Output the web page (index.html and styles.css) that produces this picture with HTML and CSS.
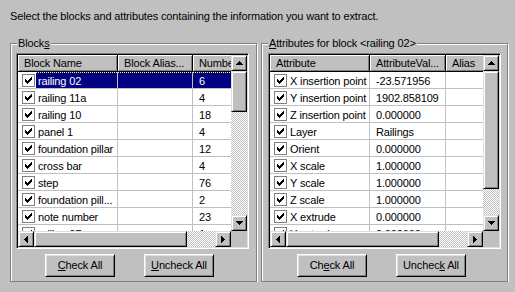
FILE: index.html
```html
<!DOCTYPE html>
<html lang="en">
<head>
    <meta charset="UTF-8">
    <meta name="viewport" content="width=device-width, initial-scale=1.0">
    <title>Extract Attributes</title>
    <link rel="stylesheet" href="styles.css">
</head>
<body>
    <svg class="defs" width="0" height="0">
        <symbol id="chk" viewBox="0 0 7 7"><path d="M0 2H1V3H2V4H3V3H4V2H5V1H6V0H7V3H6V4H5V5H4V6H3V7H2V6H1V5H0Z"/></symbol>
        <symbol id="up" viewBox="0 0 7 4"><path d="M3 0H4V1H5V2H6V3H7V4H0V3H1V2H2V1H3Z"/></symbol>
        <symbol id="down" viewBox="0 0 7 4"><path d="M0 0H7V1H6V2H5V3H4V4H3V3H2V2H1V1H0Z"/></symbol>
        <symbol id="left" viewBox="0 0 4 7"><path d="M3 0H4V7H3V6H2V5H1V4H0V3H1V2H2V1H3Z"/></symbol>
        <symbol id="right" viewBox="0 0 4 7"><path d="M0 0H1V1H2V2H3V3H4V4H3V5H2V6H1V7H0Z"/></symbol>
    </svg>

    <p class="prompt">Select the blocks and attributes containing the information you want to extract.</p>

    <div class="groups">
        <div class="group">
            <span class="group-title">Block<u>s</u></span>
            <div class="listview">
                <div class="lv-body">
                    <div class="lv-header">
                        <div class="hd c1">Block Name</div>
                        <div class="hd c2">Block Alias...</div>
                        <div class="hd c3">Number</div>
                    </div>
                    <div class="row selected">
                        <div class="cell c1"><span class="check"><svg><use href="#chk"/></svg></span><span class="label">railing 02</span></div>
                        <div class="cell c2"></div><div class="cell c3">6</div>
                    </div>
                    <div class="row">
                        <div class="cell c1"><span class="check"><svg><use href="#chk"/></svg></span><span class="label">railing 11a</span></div>
                        <div class="cell c2"></div><div class="cell c3">4</div>
                    </div>
                    <div class="row">
                        <div class="cell c1"><span class="check"><svg><use href="#chk"/></svg></span><span class="label">railing 10</span></div>
                        <div class="cell c2"></div><div class="cell c3">18</div>
                    </div>
                    <div class="row">
                        <div class="cell c1"><span class="check"><svg><use href="#chk"/></svg></span><span class="label">panel 1</span></div>
                        <div class="cell c2"></div><div class="cell c3">4</div>
                    </div>
                    <div class="row">
                        <div class="cell c1"><span class="check"><svg><use href="#chk"/></svg></span><span class="label">foundation pillar</span></div>
                        <div class="cell c2"></div><div class="cell c3">12</div>
                    </div>
                    <div class="row">
                        <div class="cell c1"><span class="check"><svg><use href="#chk"/></svg></span><span class="label">cross bar</span></div>
                        <div class="cell c2"></div><div class="cell c3">4</div>
                    </div>
                    <div class="row">
                        <div class="cell c1"><span class="check"><svg><use href="#chk"/></svg></span><span class="label">step</span></div>
                        <div class="cell c2"></div><div class="cell c3">76</div>
                    </div>
                    <div class="row">
                        <div class="cell c1"><span class="check"><svg><use href="#chk"/></svg></span><span class="label">foundation pill...</span></div>
                        <div class="cell c2"></div><div class="cell c3">2</div>
                    </div>
                    <div class="row">
                        <div class="cell c1"><span class="check"><svg><use href="#chk"/></svg></span><span class="label">note number</span></div>
                        <div class="cell c2"></div><div class="cell c3">23</div>
                    </div>
                    <div class="row">
                        <div class="cell c1"><span class="check"><svg><use href="#chk"/></svg></span><span class="label">railing 07</span></div>
                        <div class="cell c2"></div><div class="cell c3">1</div>
                    </div>
                </div>
                <div class="vscroll">
                    <div class="raised sb-btn"><svg class="arr-v"><use href="#up"/></svg></div>
                    <div class="raised thumb" style="height: 41px"></div>
                    <div class="track"></div>
                    <div class="raised sb-btn"><svg class="arr-v"><use href="#down"/></svg></div>
                </div>
                <div class="hscroll">
                    <div class="raised sb-btn"><svg class="arr-h"><use href="#left"/></svg></div>
                    <div class="raised thumb" style="width: 153px"></div>
                    <div class="track"></div>
                    <div class="raised sb-btn"><svg class="arr-h"><use href="#right"/></svg></div>
                </div>
                <div class="corner"></div>
            </div>
            <div class="buttons">
                <button class="btn"><u>C</u>heck All</button>
                <button class="btn"><u>U</u>ncheck All</button>
            </div>
        </div>

        <div class="group attrs">
            <span class="group-title"><u>A</u>ttributes for block &lt;railing 02&gt;</span>
            <div class="listview">
                <div class="lv-body">
                    <div class="lv-header">
                        <div class="hd c1">Attribute</div>
                        <div class="hd c2">AttributeVal...</div>
                        <div class="hd c3">Alias</div>
                    </div>
                    <div class="row">
                        <div class="cell c1"><span class="check"><svg><use href="#chk"/></svg></span><span class="label">X insertion point</span></div>
                        <div class="cell c2">-23.571956</div><div class="cell c3"></div>
                    </div>
                    <div class="row">
                        <div class="cell c1"><span class="check"><svg><use href="#chk"/></svg></span><span class="label">Y insertion point</span></div>
                        <div class="cell c2">1902.858109</div><div class="cell c3"></div>
                    </div>
                    <div class="row">
                        <div class="cell c1"><span class="check"><svg><use href="#chk"/></svg></span><span class="label">Z insertion point</span></div>
                        <div class="cell c2">0.000000</div><div class="cell c3"></div>
                    </div>
                    <div class="row">
                        <div class="cell c1"><span class="check"><svg><use href="#chk"/></svg></span><span class="label">Layer</span></div>
                        <div class="cell c2">Railings</div><div class="cell c3"></div>
                    </div>
                    <div class="row">
                        <div class="cell c1"><span class="check"><svg><use href="#chk"/></svg></span><span class="label">Orient</span></div>
                        <div class="cell c2">0.000000</div><div class="cell c3"></div>
                    </div>
                    <div class="row">
                        <div class="cell c1"><span class="check"><svg><use href="#chk"/></svg></span><span class="label">X scale</span></div>
                        <div class="cell c2">1.000000</div><div class="cell c3"></div>
                    </div>
                    <div class="row">
                        <div class="cell c1"><span class="check"><svg><use href="#chk"/></svg></span><span class="label">Y scale</span></div>
                        <div class="cell c2">1.000000</div><div class="cell c3"></div>
                    </div>
                    <div class="row">
                        <div class="cell c1"><span class="check"><svg><use href="#chk"/></svg></span><span class="label">Z scale</span></div>
                        <div class="cell c2">1.000000</div><div class="cell c3"></div>
                    </div>
                    <div class="row">
                        <div class="cell c1"><span class="check"><svg><use href="#chk"/></svg></span><span class="label">X extrude</span></div>
                        <div class="cell c2">0.000000</div><div class="cell c3"></div>
                    </div>
                    <div class="row">
                        <div class="cell c1"><span class="check"><svg><use href="#chk"/></svg></span><span class="label">Y extrude</span></div>
                        <div class="cell c2">0.000000</div><div class="cell c3"></div>
                    </div>
                </div>
                <div class="vscroll">
                    <div class="raised sb-btn"><svg class="arr-v"><use href="#up"/></svg></div>
                    <div class="raised thumb" style="height: 118px"></div>
                    <div class="track"></div>
                    <div class="raised sb-btn"><svg class="arr-v"><use href="#down"/></svg></div>
                </div>
                <div class="hscroll">
                    <div class="raised sb-btn"><svg class="arr-h"><use href="#left"/></svg></div>
                    <div class="raised thumb" style="width: 153px"></div>
                    <div class="track"></div>
                    <div class="raised sb-btn"><svg class="arr-h"><use href="#right"/></svg></div>
                </div>
                <div class="corner"></div>
            </div>
            <div class="buttons">
                <button class="btn">Ch<u>e</u>ck All</button>
                <button class="btn">Unchec<u>k</u> All</button>
            </div>
        </div>
    </div>
</body>
</html>
```

FILE: styles.css
```css
body {
    margin: 0;
    background: #c0c0c0;
    font: 11px/13px "Liberation Sans", Arial, sans-serif;
    letter-spacing: -0.15px;
    color: #000;
}
.defs { position: absolute; }
svg { shape-rendering: crispEdges; fill: #000; display: block; }
u { text-underline-offset: 1px; }

.prompt {
    margin: 0;
    padding: 10px 10px 0;
}

.groups {
    display: flex;
    gap: 4px;
    margin: 20px 0 0 10px;
}
.group {
    position: relative;
    width: 247px;
    height: 239px;
    box-sizing: border-box;
    border: 1px solid #808080;
    box-shadow: 1px 1px 0 #fff, inset 1px 1px 0 #fff;
    padding: 9px 0 0 5px;
}
.group.attrs { padding-left: 6px; }
.group-title {
    position: absolute;
    top: -7px;
    left: 6px;
    padding: 0 1px;
    background: #c0c0c0;
    white-space: nowrap;
}

/* list view */
.listview {
    display: grid;
    grid-template-columns: 213px 16px;
    grid-template-rows: 176px 16px;
    width: 233px;
    height: 196px;
    box-sizing: border-box;
    border: 1px solid;
    border-color: #808080 #fff #fff #808080;
    box-shadow: inset 1px 1px 0 #000, inset -1px -1px 0 #dfdfdf;
    padding: 1px;
    background: #fff;
}
.lv-body { overflow: hidden; }
.lv-header, .row { display: flex; }

.hd {
    flex: none;
    height: 17px;
    box-sizing: border-box;
    background: #c0c0c0;
    border-right: 1px solid #000;
    border-bottom: 1px solid #000;
    box-shadow: inset 1px 1px 0 #fff, inset -1px -1px 0 #808080;
    padding: 1px 0 0 6px;
    line-height: 15px;
    white-space: nowrap;
    overflow: hidden;
}
.c1 { width: 100px; }
.c2 { width: 75px; }
.c3 { width: 60px; }
.attrs .c2 { width: 76px; }

.cell {
    flex: none;
    height: 17px;
    box-sizing: border-box;
    border-right: 1px solid #c0c0c0;
    border-bottom: 1px solid #c0c0c0;
    padding: 3px 0 0 6px;
    white-space: nowrap;
    overflow: hidden;
}
.cell.c1 {
    display: flex;
    padding: 0 0 0 4px;
}
.check {
    flex: none;
    width: 13px;
    height: 13px;
    box-sizing: border-box;
    margin-top: 2px;
    border: 1px solid #808080;
    background: #fff;
    display: flex;
    align-items: center;
    justify-content: center;
}
.check svg { width: 7px; height: 7px; }
.label {
    flex: 1;
    min-width: 0;
    margin-left: 1px;
    padding: 3px 2px 0;
    overflow: hidden;
}
.selected .label, .selected .c2, .selected .c3 {
    background: #000080 repeating-linear-gradient(90deg, #ffff80 0 1px, transparent 1px 2px) top / 100% 1px no-repeat;
    color: #fff;
}

/* scroll bars */
.raised {
    box-sizing: border-box;
    background: #c0c0c0;
    border: 1px solid;
    border-color: #dfdfdf #000 #000 #dfdfdf;
    box-shadow: inset 1px 1px 0 #fff, inset -1px -1px 0 #808080;
}
.vscroll, .hscroll {
    display: flex;
    background: repeating-conic-gradient(#fff 0 25%, #c0c0c0 0 50%) 0 0 / 2px 2px;
}
.vscroll { flex-direction: column; }
.sb-btn {
    flex: none;
    width: 16px;
    height: 16px;
    display: flex;
    align-items: center;
    justify-content: center;
}
.thumb { flex: none; }
.vscroll .thumb { width: 16px; }
.hscroll .thumb { height: 16px; }
.track { flex: 1; }
.arr-v { width: 7px; height: 4px; }
.arr-h { width: 4px; height: 7px; }
.corner { background: #c0c0c0; }

/* buttons */
.buttons {
    display: flex;
    gap: 29px;
    margin: 5px 0 0 29px;
}
.btn {
    width: 70px;
    height: 23px;
    padding: 0;
    font: inherit;
    letter-spacing: inherit;
    color: #000;
    background: #c0c0c0;
    border: 1px solid;
    border-color: #fff #000 #000 #fff;
    box-shadow: inset 1px 1px 0 #dfdfdf, inset -1px -1px 0 #808080;
}
```
